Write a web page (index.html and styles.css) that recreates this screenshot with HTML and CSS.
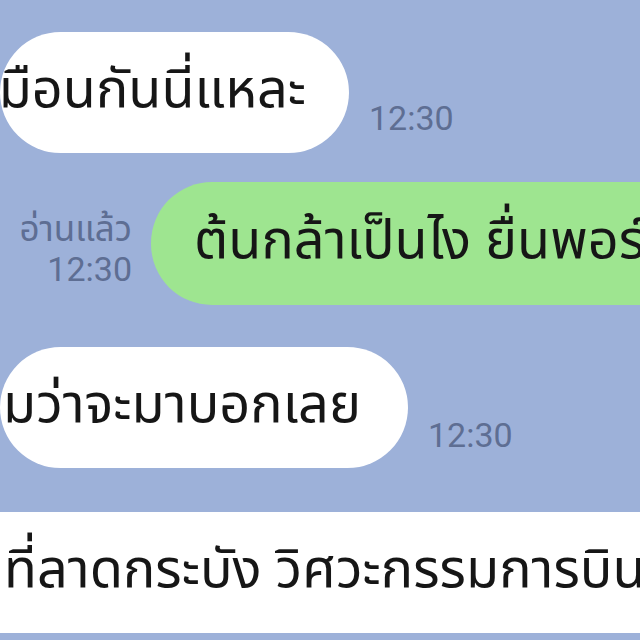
FILE: index.html
```html
<!DOCTYPE html>
<html lang="th">
  <head>
    <meta charset="UTF-8" />
    <meta name="viewport" content="width=device-width, initial-scale=1.0" />
    <title>Chat</title>
    <link rel="stylesheet" href="styles.css">
  </head>
  <body>
    <div class="chat">
      <div class="row row-in">
        <div class="bubble bubble-in bubble-one">
          <span class="msg">เหมือนกันนี่แหละ</span>
        </div>
        <div class="meta">
          <span class="time">12:30</span>
        </div>
      </div>

      <div class="row row-out">
        <div class="meta meta-out">
          <span class="read">อ่านแล้ว</span>
          <span class="time">12:30</span>
        </div>
        <div class="bubble bubble-out">
          <span class="msg">ต้นกล้าเป็นไง ยื่นพอร์ตที่ไหนบ้าง</span>
        </div>
      </div>

      <div class="row row-in">
        <div class="bubble bubble-in bubble-three">
          <span class="msg">ผมว่าจะมาบอกเลย</span>
        </div>
        <div class="meta meta-low">
          <span class="time">12:30</span>
        </div>
      </div>

      <div class="row row-in">
        <div class="bubble bubble-in bubble-wide">
          <span class="msg">ที่ลาดกระบัง วิศวะกรรมการบินและอวกาศ</span>
        </div>
      </div>
    </div>
  </body>
</html>
```

FILE: styles.css
```css
:root {
  --background-color: #9db1d9;
  --bubble-in: #ffffff;
  --bubble-out: #9ee590;
  --text-color: #161616;
  --meta-color: #5e6e93;
}

* {
  box-sizing: border-box;
}

body {
  margin: 0;
  width: 640px;
  height: 640px;
  overflow: hidden;
  background: var(--background-color);
  font-family: "Noto Sans Thai", "Noto Sans", "DejaVu Sans", sans-serif;
  color: var(--text-color);
}

.chat {
  display: flex;
  flex-direction: column;
  padding-top: 32px;
}

.row {
  display: flex;
  align-items: flex-end;
  height: 121px;
  flex-shrink: 0;
}

.row-out {
  margin-top: 29px;
  height: 123px;
}

.row-in + .row-in {
  margin-top: 44px;
}

.row-out + .row-in {
  margin-top: 42px;
}

.bubble {
  display: flex;
  align-items: center;
  height: 100%;
  border-radius: 61px;
  flex-shrink: 0;
  white-space: nowrap;
  overflow: hidden;
}

.bubble-in {
  background: var(--bubble-in);
  justify-content: flex-end;
  padding-right: 43px;
}

.bubble-one {
  width: 349px;
}

.bubble-three {
  width: 408px;
  padding-right: 47px;
}

.bubble-wide {
  width: 660px;
  border-radius: 0;
  justify-content: flex-start;
  padding-left: 4px;
}

.bubble-out {
  background: var(--bubble-out);
  padding-left: 43px;
  width: 560px;
}

.msg {
  font-size: 54px;
  line-height: 1;
  padding-bottom: 4px;
}

.meta {
  display: flex;
  flex-direction: column;
  align-items: flex-end;
  flex-shrink: 0;
  padding-left: 20px;
  padding-bottom: 18px;
  color: var(--meta-color);
  font-family: Roboto, "Noto Sans Thai", sans-serif;
}

.meta-low {
  padding-bottom: 16px;
}

.meta-out {
  width: 151px;
  padding-left: 0;
  padding-right: 19px;
  padding-bottom: 19px;
}

.time {
  font-size: 34px;
  line-height: 1;
}

.read {
  font-family: "Noto Sans Thai", sans-serif;
  font-size: 35px;
  line-height: 1.2;
}
```
